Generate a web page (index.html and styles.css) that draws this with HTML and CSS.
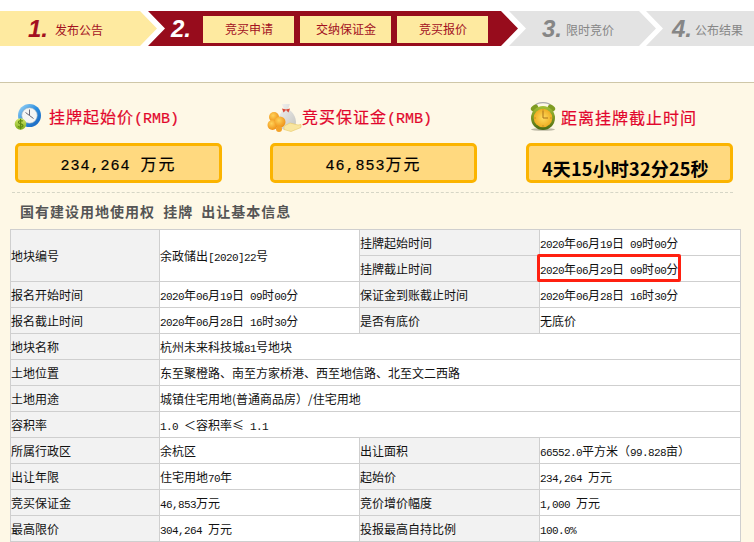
FILE: index.html
```html
<!DOCTYPE html>
<html lang="zh-CN">
<head>
<meta charset="utf-8">
<title>挂牌出让基本信息</title>
<link rel="stylesheet" href="styles.css">
</head>
<body>
<div class="page">
  <header class="top">
    <nav class="steps">
      <div class="step step-1"><b class="no">1.</b><span>发布公告</span></div>
      <div class="step step-2"><b class="no">2.</b>
        <a class="sub">竞买申请</a><a class="sub">交纳保证金</a><a class="sub">竞买报价</a>
      </div>
      <div class="step step-3"><b class="no">3.</b><span>限时竞价</span></div>
      <div class="step step-4"><b class="no">4.</b><span>公布结果</span></div>
    </nav>
  </header>
  <main class="main">
    <section class="stats">
      <div class="stat stat-a">
        <h2 class="stat-title">
          <svg class="ico ico-clock" viewBox="0 0 27 27" aria-hidden="true">
            <defs>
              <linearGradient id="ring" x1="0" y1="0" x2="1" y2="1"><stop offset="0" stop-color="#a8dcf8"/><stop offset=".5" stop-color="#2a8ee0"/><stop offset="1" stop-color="#1a5fb8"/></linearGradient>
              <linearGradient id="coin" x1="0" y1="0" x2="0" y2="1"><stop offset="0" stop-color="#d8ec70"/><stop offset="1" stop-color="#7cab18"/></linearGradient>
            </defs>
            <circle cx="15.5" cy="11.5" r="11.5" fill="url(#ring)"/>
            <circle cx="15.5" cy="11.5" r="7.800" fill="#f5f6f4" stroke="#8fa8bc" stroke-width=".6"/>
            <path d="M15.5 5.5v6l4 3M15.5 11.5l-4-3" fill="none" stroke="#667" stroke-width="1"/>
            <circle cx="6.5" cy="20" r="5.8" fill="url(#coin)"/>
            <path d="M9 17.2c-1-1-4.6-1-4.6 1 0 2.2 4.6 1.3 4.6 3.4 0 1.9-3.6 1.9-5 .8M6.6 14.8v10.4" fill="none" stroke="#5f8a12" stroke-width="1.2"/>
          </svg>
          <span>挂牌起始价<i class="latin">(RMB)</i></span>
        </h2>
        <div class="amount"><span class="amount-n">234,264&nbsp;</span><span class="amount-c">万元</span></div>
      </div>
      <div class="stat stat-b">
        <h2 class="stat-title">
          <svg class="ico ico-bag" viewBox="0 0 35 28" aria-hidden="true">
            <defs>
              <radialGradient id="gold" cx=".4" cy=".35" r=".7"><stop offset="0" stop-color="#ffd35a"/><stop offset="1" stop-color="#ee8c12"/></radialGradient>
              <linearGradient id="sack" x1="0" y1="0" x2="1" y2="1"><stop offset="0" stop-color="#f4f4f2"/><stop offset="1" stop-color="#c4c4c0"/></linearGradient>
            </defs>
            <path d="M15 0h8l-2 5c5 3 8 8 8 13 0 5-4 8-9 8s-9-3-9-8c0-5 3-10 6-13z" fill="url(#sack)"/>
            <path d="M15 4.500l4 1 4-1-1.500 4-2.500-2.500-2.500 2.500z" fill="#d94a3a"/>
            <circle cx="7" cy="13" r="5" fill="url(#gold)"/>
            <circle cx="5.500" cy="21" r="5" fill="url(#gold)"/>
            <circle cx="13" cy="18" r="5.500" fill="url(#gold)"/>
            <circle cx="12" cy="25" r="3" fill="#f3a228"/>
            <path d="M17 22l6-3 8 2 3-.5v3l-10 4-7-2z" fill="#f9e6a0" stroke="#e7c765" stroke-width=".6"/>
          </svg>
          <span>竞买保证金<i class="latin">(RMB)</i></span>
        </h2>
        <div class="amount"><span class="amount-n">46,853</span><span class="amount-c">万元</span></div>
      </div>
      <div class="stat stat-c">
        <h2 class="stat-title">
          <svg class="ico ico-alarm" viewBox="0 0 26 30" aria-hidden="true">
            <defs>
              <radialGradient id="face" cx=".5" cy=".5" r=".55"><stop offset="0" stop-color="#ffdc5e"/><stop offset="1" stop-color="#eda81c"/></radialGradient>
              <linearGradient id="shell" x1="0" y1="0" x2="0" y2="1"><stop offset="0" stop-color="#a6c236"/><stop offset="1" stop-color="#4c6a12"/></linearGradient>
            </defs>
            <path d="M5 5C7 .5 19 .5 21 5" fill="none" stroke="#a9a9a9" stroke-width="1.200"/>
            <ellipse cx="4.500" cy="7" rx="4" ry="2.800" fill="#7f9c22" transform="rotate(-35 4.500 7)"/>
            <ellipse cx="21.500" cy="7" rx="4" ry="2.800" fill="#7f9c22" transform="rotate(35 21.500 7)"/>
            <ellipse cx="13" cy="28.500" rx="12" ry="1.300" fill="#bdb9a5"/>
            <circle cx="13" cy="17" r="12" fill="url(#shell)"/>
            <circle cx="13" cy="17" r="9.300" fill="url(#face)"/>
            <path d="M13 10v7h5" fill="none" stroke="#a9701a" stroke-width="1"/>
            <path d="M13 8.500v1.200M13 24.300v1.200M4.500 17h1.200M20.300 17h1.200" stroke="#a9701a" stroke-width=".8"/>
          </svg>
          <span>距离挂牌截止时间</span>
        </h2>
        <div class="amount amount-time">4天15小时32分25秒</div>
      </div>
    </section>
    <h1 class="heading">国有建设用地使用权&nbsp;挂牌&nbsp;出让基本信息</h1>
    <table class="info">
      <colgroup><col class="c1"><col class="c2"><col class="c3"><col class="c4"></colgroup>
      <tr><th rowspan="2">地块编号</th><td rowspan="2">余政储出<span class="n">[2020]22</span>号</td><th>挂牌起始时间</th><td><span class="n">2020</span>年<span class="n">06</span>月<span class="n">19</span>日<span class="n"> 09</span>时<span class="n">00</span>分</td></tr>
      <tr><th>挂牌截止时间</th><td class="marked"><span class="n">2020</span>年<span class="n">06</span>月<span class="n">29</span>日<span class="n"> 09</span>时<span class="n">00</span>分<span class="mark"></span></td></tr>
      <tr><th>报名开始时间</th><td><span class="n">2020</span>年<span class="n">06</span>月<span class="n">19</span>日<span class="n"> 09</span>时<span class="n">00</span>分</td><th>保证金到账截止时间</th><td><span class="n">2020</span>年<span class="n">06</span>月<span class="n">28</span>日<span class="n"> 16</span>时<span class="n">30</span>分</td></tr>
      <tr><th>报名截止时间</th><td><span class="n">2020</span>年<span class="n">06</span>月<span class="n">28</span>日<span class="n"> 16</span>时<span class="n">30</span>分</td><th>是否有底价</th><td>无底价</td></tr>
      <tr><th>地块名称</th><td colspan="3">杭州未来科技城<span class="n">81</span>号地块</td></tr>
      <tr><th>土地位置</th><td colspan="3">东至聚橙路、南至方家桥港、西至地信路、北至文二西路</td></tr>
      <tr><th>土地用途</th><td colspan="3">城镇住宅用地(普通商品房）/住宅用地</td></tr>
      <tr><th>容积率</th><td colspan="3"><span class="n">1.0 </span>＜容积率≤<span class="n"> 1.1</span></td></tr>
      <tr><th>所属行政区</th><td>余杭区</td><th>出让面积</th><td><span class="n">66552.0</span>平方米（<span class="n">99.828</span>亩）</td></tr>
      <tr><th>出让年限</th><td>住宅用地<span class="n">70</span>年</td><th>起始价</th><td><span class="n">234,264 </span>万元</td></tr>
      <tr><th>竞买保证金</th><td><span class="n">46,853</span>万元</td><th>竞价增价幅度</th><td><span class="n">1,000 </span>万元</td></tr>
      <tr><th>最高限价</th><td><span class="n">304,264 </span>万元</td><th>投报最高自持比例</th><td><span class="n">100.0%</span></td></tr>
    </table>
  </main>
</div>
</body>
</html>
```
FILE: styles.css
```css
* { box-sizing: border-box; }
html, body { margin: 0; padding: 0; background: #fff; }
.page {
  width: 754px;
  height: 542px;
  overflow: hidden;
  font-family: "Noto Sans CJK SC", "Liberation Sans", sans-serif;
  font-size: 12px;
  color: #111;
}
.top {
  height: 83px;
  padding-top: 11px;
  background: #fff;
  border-bottom: 1px solid #cfc7a8;
}
.steps { display: flex; height: 35px; }
.step {
  display: flex;
  align-items: center;
  height: 35px;
  flex: none;
}
.step > span { padding-top: 2px; }
.no {
  font: italic bold 24px/1 "Liberation Sans", sans-serif;
  width: 27px;
  flex: none;
}
.step-1 {
  width: 157px;
  padding-left: 28px;
  background: #feeaa0;
  color: #a3101f;
  clip-path: polygon(0 0, 140px 0, 157px 17.5px, 140px 35px, 0 35px);
}
.step-2 {
  width: 370px;
  margin-left: -9px;
  padding-left: 23px;
  background: #970c1c;
  color: #fff;
  clip-path: polygon(0 0, 353px 0, 370px 17.5px, 353px 35px, 0 35px, 17px 17.5px);
}
.step-2 .no { width: 32px; }
.sub {
  width: 91px;
  height: 27px;
  margin-right: 6px;
  margin-top: 1px;
  background: #feeaa0;
  color: #a3101f;
  text-align: center;
  line-height: 25px;
  padding-left: 1px;
}
.step-3 {
  width: 147px;
  margin-left: -9px;
  padding-left: 33px;
  background: #e3e3e3;
  color: #868686;
  clip-path: polygon(0 0, 130px 0, 147px 17.5px, 130px 35px, 0 35px, 17px 17.5px);
}
.step-3 .no { width: 24px; }
.step-4 {
  flex: 1;
  margin-left: -10px;
  padding-left: 26px;
  background: #e3e3e3;
  color: #868686;
  clip-path: polygon(0 0, 100% 0, 100% 35px, 0 35px, 17px 17.5px);
}
.step-4 .no { width: 23px; }

.main {
  height: 459px;
  background: #fef8e6;
  padding-top: 16px;
}
.stats {
  display: flex;
  margin: 0 21px 0 12px;
  padding: 0 0 9px 3px;
  border-bottom: 1px dashed #d6d6c6;
}
.stat { width: 207px; flex: none; }
.stat-b { margin-left: 48px; }
.stat-c { margin-left: 49px; }
.stat-title {
  display: flex;
  align-items: center;
  height: 35px;
  margin: 0 0 9px;
  font-size: 16px;
  line-height: 22px;
  font-weight: normal;
  letter-spacing: 1px;
  color: #e2062c;
  -webkit-text-stroke: .2px #e2062c;
}
.latin {
  font: normal 15px "Liberation Mono", monospace;
  letter-spacing: 0;
}
.ico { flex: none; display: block; }
.ico-clock { width: 27px; height: 27px; margin: 2px 8px 0 -1px; }
.ico-bag { width: 35px; height: 28px; margin: 2px 0 0 -3px; }
.ico-alarm { width: 26px; height: 30px; margin: -1px 5px 0 4px; }
.amount {
  height: 40px;
  border: 3px solid #fbb400;
  border-radius: 5px;
  background: #ffd97f;
  text-align: center;
  font-size: 16px;
  line-height: 34px;
  color: #000;
  letter-spacing: 2px;
}
.amount-n { font: 15px "Liberation Mono", monospace; letter-spacing: 1px; -webkit-text-stroke: .2px #000; }
.amount-c { -webkit-text-stroke: .2px #000; }
.amount-time {
  padding-left: 13px;
  text-align: left;
  font-size: 18px;
  font-weight: 700;
  letter-spacing: .2px;
  line-height: 44px;
}
.heading {
  margin: 7px 0 7px 20px;
  height: 22px;
  font-size: 14px;
  line-height: 22px;
  font-weight: 700;
  letter-spacing: 1px;
  word-spacing: 4px;
  color: #555;
}
.info {
  width: 730px;
  margin-left: 10px;
  table-layout: fixed;
  border-collapse: collapse;
  background: #fff;
}
.c1 { width: 149px; }
.c2 { width: 200px; }
.c3 { width: 180px; }
.c4 { width: 201px; }
.info tr { height: 26px; }
.info th, .info td {
  border: 1px solid #cfcfcf;
  padding: 0;
  font-size: 12px;
  line-height: 16px;
  font-weight: normal;
  text-align: left;
  white-space: nowrap;
  color: #111;
}
.info th { background: #f2f2f2; }
.n { font: 11px "Liberation Mono", monospace; letter-spacing: -.6px; white-space: pre; }
.marked { position: relative; }
.mark {
  position: absolute;
  left: -3px;
  top: -2px;
  width: 144px;
  height: 28px;
  border: 3px solid #ff2010;
  border-radius: 2px;
}
```
